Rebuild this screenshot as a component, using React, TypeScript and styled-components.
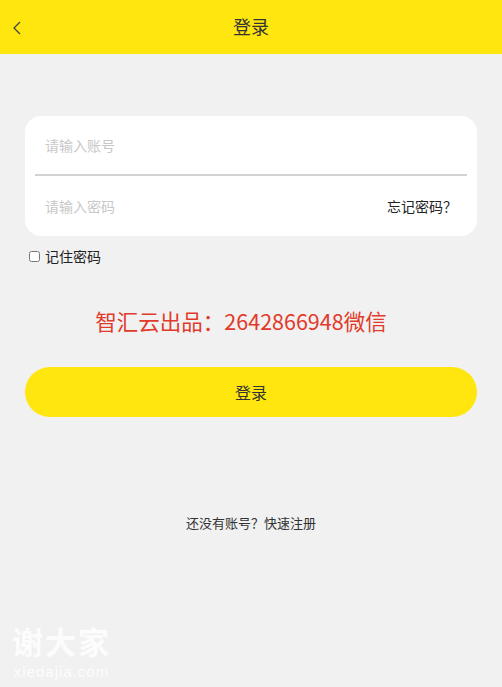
import styled, { createGlobalStyle } from 'styled-components';

const GlobalStyle = createGlobalStyle`
    html, body {
        margin: 0;
        padding: 0;
        background: #f1f1f1;
        font-family: "Noto Sans CJK SC", "Noto Sans", sans-serif;
    }
`;

const Page = styled.div`
    position: relative;
    width: 502px;
    height: 687px;
    overflow: hidden;
    background: #f1f1f1;
`;

const Header = styled.div`
    height: 54px;
    background: #ffe60f;
    display: flex;
    align-items: center;
    justify-content: center;
    position: relative;
    font-size: 18px;
    line-height: 20px;
    padding-bottom: 2px;
    box-sizing: border-box;
    color: #333;
`;

const BackBtn = styled.div`
    position: absolute;
    left: 10px;
    top: 19px;
    width: 16px;
    height: 18px;
    display: flex;
`;

const Body = styled.div`
    padding: 62px 25px 0;
`;

const Card = styled.div`
    background: #fff;
    border-radius: 16px;
    padding: 0 10px;
`;

const Row = styled.div<{ $line?: boolean }>`
    height: 60px;
    display: flex;
    align-items: center;
    justify-content: space-between;
    padding: 0 10px 0 10px;
    border-bottom: ${(p) => (p.$line ? '2px solid #d2d2d2' : 'none')};
    box-sizing: border-box;
`;

const Input = styled.input`
    border: none;
    outline: none;
    font-family: inherit;
    font-size: 14px;
    color: #333;
    background: transparent;
    flex: 1;
    padding: 0;
    &::placeholder {
        color: #c8c8c8;
    }
`;

const Forgot = styled.span`
    font-size: 14px;
    color: #222;
`;

const Remember = styled.label`
    display: flex;
    align-items: center;
    gap: 5px;
    margin-top: 10px;
    padding-left: 4px;
    font-size: 14px;
    color: #222;
    input {
        margin: 0;
        width: 11px;
        height: 11px;
    }
`;

const Promo = styled.div`
    margin-top: 40px;
    padding-right: 20px;
    text-align: center;
    color: #e23a2a;
    font-size: 21.5px;
    line-height: 30px;
`;

const LoginBtn = styled.button`
    margin-top: 31px;
    width: 100%;
    height: 50px;
    border: none;
    border-radius: 25px;
    background: #ffe60f;
    font-family: inherit;
    font-size: 16px;
    color: #333;
`;

const Register = styled.div`
    margin-top: 96px;
    text-align: center;
    font-size: 13px;
    color: #333;
`;

const Watermark = styled.div`
    position: absolute;
    left: 12px;
    bottom: 7px;
    color: rgba(255, 255, 255, 0.85);
    display: flex;
    flex-direction: column;
    align-items: center;
    gap: 8px;
    .big {
        font-size: 31px;
        font-weight: bold;
        line-height: 30px;
        letter-spacing: 2px;
    }
    .small {
        font-family: "Liberation Sans", sans-serif;
        font-size: 15px;
        line-height: 16px;
        letter-spacing: 1px;
    }
`;

const App = () => {
    return (
        <Page>
            <GlobalStyle />
            <Header>
                <BackBtn>
                    <svg width="16" height="18" viewBox="0 0 16 18">
                        <polyline points="10,3 4,9 10,15" fill="none" stroke="#444" strokeWidth="1.3" />
                    </svg>
                </BackBtn>
                登录
            </Header>
            <Body>
                <Card>
                    <Row $line>
                        <Input placeholder="请输入账号" />
                    </Row>
                    <Row>
                        <Input type="password" placeholder="请输入密码" />
                        <Forgot>忘记密码？</Forgot>
                    </Row>
                </Card>
                <Remember>
                    <input type="checkbox" />
                    记住密码
                </Remember>
                <Promo>智汇云出品：2642866948微信</Promo>
                <LoginBtn>登录</LoginBtn>
                <Register>还没有账号？快速注册</Register>
            </Body>
            <Watermark>
                <span className="big">谢大家</span>
                <span className="small">xiedajia.com</span>
            </Watermark>
        </Page>
    );
};

export default App;
